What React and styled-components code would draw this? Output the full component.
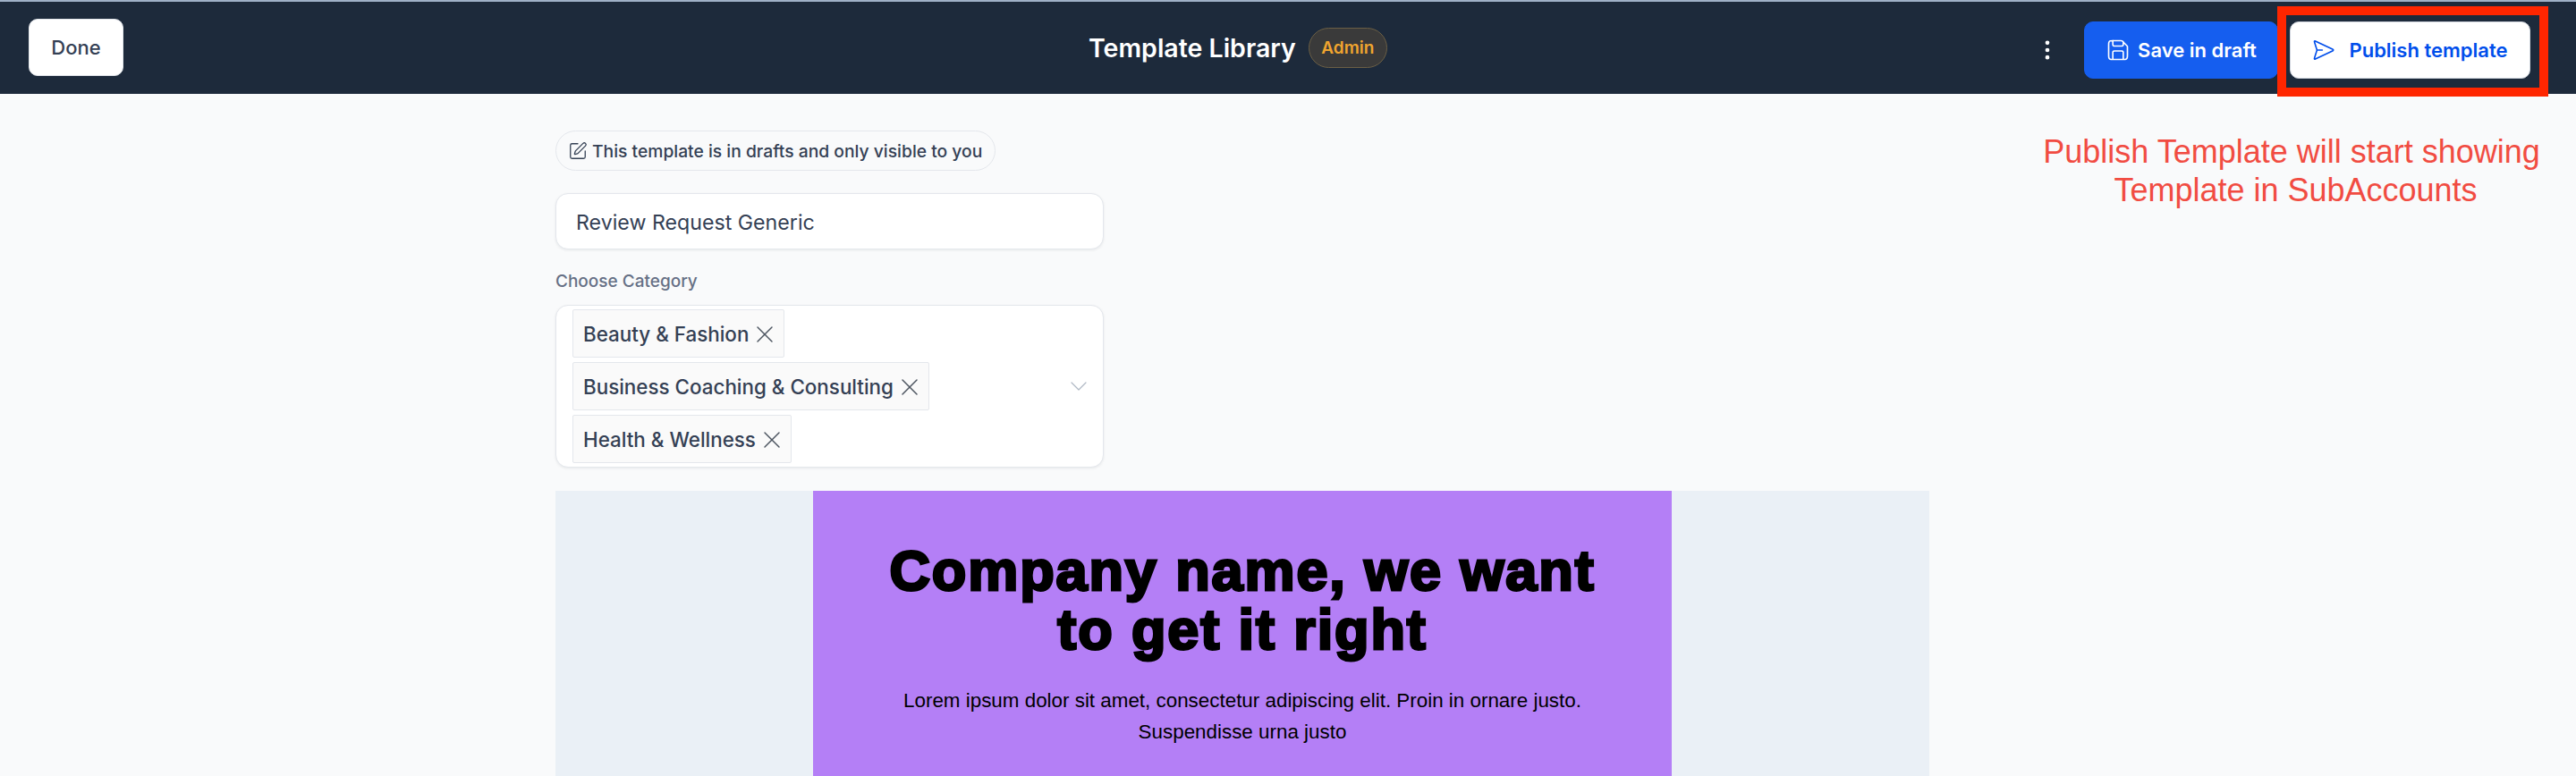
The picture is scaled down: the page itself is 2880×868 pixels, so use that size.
import React from 'react';
import styled, { createGlobalStyle } from 'styled-components';
import { SquarePen, X, ChevronDown, EllipsisVertical } from 'lucide-react';

const GlobalStyle = createGlobalStyle`
    html, body {
        margin: 0;
        padding: 0;
        height: 100%;
        overflow: hidden;
        background: #f9fafb;
    }
    * {
        box-sizing: border-box;
    }
`;

const Page = styled.div`
    position: relative;
    width: 2880px;
    height: 868px;
    overflow: hidden;
    background: #f9fafb;
    font-family: Inter, 'Liberation Sans', sans-serif;
`;

const Header = styled.header`
    display: grid;
    grid-template-columns: 1185px auto 1fr;
    align-items: center;
    height: 105px;
    padding: 0 51px 0 32px;
    background: #1d2a3b;
    border-top: 2px solid #9fb0c6;
`;

const Done = styled.button`
    justify-self: start;
    width: 106px;
    height: 64px;
    margin-bottom: 1px;
    border: 1px solid #e4e7ec;
    border-radius: 10px;
    background: #fff;
    color: #344054;
    font: 500 22px Inter, sans-serif;
`;

const TitleGroup = styled.div`
    display: flex;
    align-items: center;
    gap: 14px;
    margin-bottom: 1px;
`;

const Title = styled.h1`
    margin: 0;
    color: #fff;
    font: 600 28.5px Inter, sans-serif;
`;

const Badge = styled.span`
    display: flex;
    align-items: center;
    justify-content: center;
    width: 88px;
    height: 45px;
    border: 1px solid #6b5f45;
    border-radius: 23px;
    background: #3a3a3a;
    color: #f0a52f;
    font: 600 19px Inter, sans-serif;
`;

const Actions = styled.div`
    display: flex;
    align-items: center;
    justify-content: flex-end;
    margin-top: 5px;
`;

const Dots = styled.div`
    display: flex;
    margin-right: 27px;
    color: #fff;
`;

const ActionButton = styled.button`
    display: flex;
    align-items: center;
    justify-content: center;
    gap: ${p => p.$gap}px;
    width: ${p => p.$width}px;
    height: 64px;
    margin-left: ${p => p.$offset || 0}px;
    border: 1px solid ${p => (p.$primary ? '#155eef' : '#d0d5dd')};
    border-radius: 10px;
    background: ${p => (p.$primary ? '#155eef' : '#fff')};
    color: ${p => (p.$primary ? '#fff' : '#004eeb')};
    font: 600 22px Inter, sans-serif;
`;

const Highlight = styled.div`
    position: absolute;
    top: 7px;
    left: 2546px;
    width: 303px;
    height: 101px;
    border: 10px solid #ff2600;
`;

const Note = styled.div`
    position: absolute;
    top: 148px;
    left: 2250px;
    width: 624px;
    color: #f14c42;
    font: 400 36px/43px 'Liberation Sans', Arial, sans-serif;
    text-align: center;
`;

const NoteLine = styled.span`
    display: block;
    padding-left: ${p => p.$indent || 0}px;
`;

const Main = styled.main`
    display: flex;
    flex-direction: column;
    align-items: flex-start;
    padding: 41px 0 0 621px;
`;

const Notice = styled.div`
    display: flex;
    align-items: center;
    gap: 5px;
    height: 45px;
    padding: 0 14px 0 13px;
    border: 1px solid #e4e7ec;
    border-radius: 23px;
    color: #344054;
    font: 500 19.3px Inter, sans-serif;
`;

const NameInput = styled.div`
    display: flex;
    align-items: center;
    width: 613px;
    height: 63px;
    margin-top: 25px;
    padding: 2px 22px 0;
    border: 1px solid #e4e7ec;
    border-radius: 14px;
    background: #fff;
    box-shadow: 0 1px 3px rgba(16, 24, 40, 0.08);
    color: #344054;
    font: 400 23.2px Inter, sans-serif;
`;

const Label = styled.label`
    margin-top: 24px;
    color: #667085;
    font: 500 19px/23px Inter, sans-serif;
`;

const Select = styled.div`
    display: flex;
    align-items: center;
    justify-content: space-between;
    width: 613px;
    height: 182px;
    margin-top: 15px;
    padding: 0 11px 0 18px;
    border: 1px solid #e4e7ec;
    border-radius: 14px;
    background: #fff;
    box-shadow: 0 1px 3px rgba(16, 24, 40, 0.08);
`;

const Tags = styled.div`
    display: flex;
    flex-direction: column;
    align-items: flex-start;
    gap: 5px;
`;

const Tag = styled.span`
    display: flex;
    align-items: center;
    gap: 2px;
    height: 54px;
    padding: 1px 5px 0 11px;
    border: 1px solid #e4e7ec;
    border-radius: 2px;
    background: #fafafa;
    color: #344054;
    font: 500 22.4px Inter, sans-serif;
`;

const Preview = styled.section`
    display: flex;
    justify-content: center;
    width: 1536px;
    height: 320px;
    margin-top: 26px;
    background: #eaf0f6;
`;

const Hero = styled.div`
    width: 960px;
    padding-top: 56px;
    background: #b47ff6;
    color: #000;
    text-align: center;
`;

const Headline = styled.h2`
    margin: 0;
    font: 900 63px/66px 'Liberation Sans', Arial, sans-serif;
    -webkit-text-stroke: 3px #000;
    letter-spacing: 1.9px;
`;

const Body = styled.p`
    margin: 29px 0 0;
    font: 400 22.4px/35px 'Liberation Sans', Arial, sans-serif;
`;

const SaveIcon = () => (
    <svg width="28" height="28" viewBox="0 0 24 24" fill="none" stroke="currentColor" strokeWidth="1.4" strokeLinecap="round" strokeLinejoin="round">
        <path d="M7 3v3.4c0 .6 0 .9.1 1.1.1.2.3.4.5.5.2.1.5.1 1.1.1h6.6c.6 0 .9 0 1.1-.1.2-.1.4-.3.5-.5.1-.2.1-.5.1-1.1V4M17 21v-6.4c0-.6 0-.9-.1-1.1-.1-.2-.3-.4-.5-.5-.2-.1-.5-.1-1.1-.1H8.700c-.6 0-.9 0-1.100.1-.2.1-.4.3-.5.5-.1.2-.1.5-.1 1.100V21M21 9.300V16.800c0 1.500 0 2.200-.3 2.800-.2.500-.6.900-1.100 1.100-.6.300-1.300.300-2.800.300H7.200c-1.500 0-2.200 0-2.800-.3-.5-.2-.9-.6-1.100-1.100C3 19 3 18.300 3 16.800V7.200c0-1.500 0-2.200.3-2.800.2-.5.6-.9 1.100-1.100C5 3 5.700 3 7.200 3h7.500c.5 0 .7 0 .9.100.2.100.4.200.5.300l4.500 4.500c.1.100.3.300.3.500.1.200.1.400.1.900z" />
    </svg>
);

const SendIcon = () => (
    <svg width="26" height="26" viewBox="0 0 24 24" fill="none" stroke="currentColor" strokeWidth="1.5" strokeLinecap="round" strokeLinejoin="round">
        <path d="M10.500 12H5L2.300 3.500c-.2-.6.400-1.100 1-.8L21.500 11.400c.5.200.5 1 0 1.200L3.300 21.300c-.6.300-1.200-.2-1-.8L5 12" />
    </svg>
);

const categories = ['Beauty & Fashion', 'Business Coaching & Consulting', 'Health & Wellness'];

export default function App() {
    return (
        <Page>
            <GlobalStyle />
            <Header>
                <Done>Done</Done>
                <TitleGroup>
                    <Title>Template Library</Title>
                    <Badge>Admin</Badge>
                </TitleGroup>
                <Actions>
                    <Dots>
                        <EllipsisVertical size={28} />
                    </Dots>
                    <ActionButton $primary $width={217} $gap={8}>
                        <SaveIcon />
                        Save in draft
                    </ActionButton>
                    <ActionButton $width={269} $gap={15} $offset={13}>
                        <SendIcon />
                        Publish template
                    </ActionButton>
                </Actions>
            </Header>
            <Highlight />
            <Note>
                <NoteLine>Publish Template will start showing</NoteLine>
                <NoteLine $indent={9}>Template in SubAccounts</NoteLine>
            </Note>
            <Main>
                <Notice>
                    <SquarePen size={22} strokeWidth={1.4} />
                    This template is in drafts and only visible to you
                </Notice>
                <NameInput>Review Request Generic</NameInput>
                <Label>Choose Category</Label>
                <Select>
                    <Tags>
                        {categories.map(name => (
                            <Tag key={name}>
                                {name}
                                <X size={32} strokeWidth={1.1} color="#4d5560" />
                            </Tag>
                        ))}
                    </Tags>
                    <ChevronDown size={32} strokeWidth={0.9} color="#b0b8c4" />
                </Select>
                <Preview>
                    <Hero>
                        <Headline>
                            Company name, we want
                            <br />
                            to get it right
                        </Headline>
                        <Body>
                            Lorem ipsum dolor sit amet, consectetur adipiscing elit. Proin in ornare justo.
                            <br />
                            Suspendisse urna justo
                        </Body>
                    </Hero>
                </Preview>
            </Main>
        </Page>
    );
}
